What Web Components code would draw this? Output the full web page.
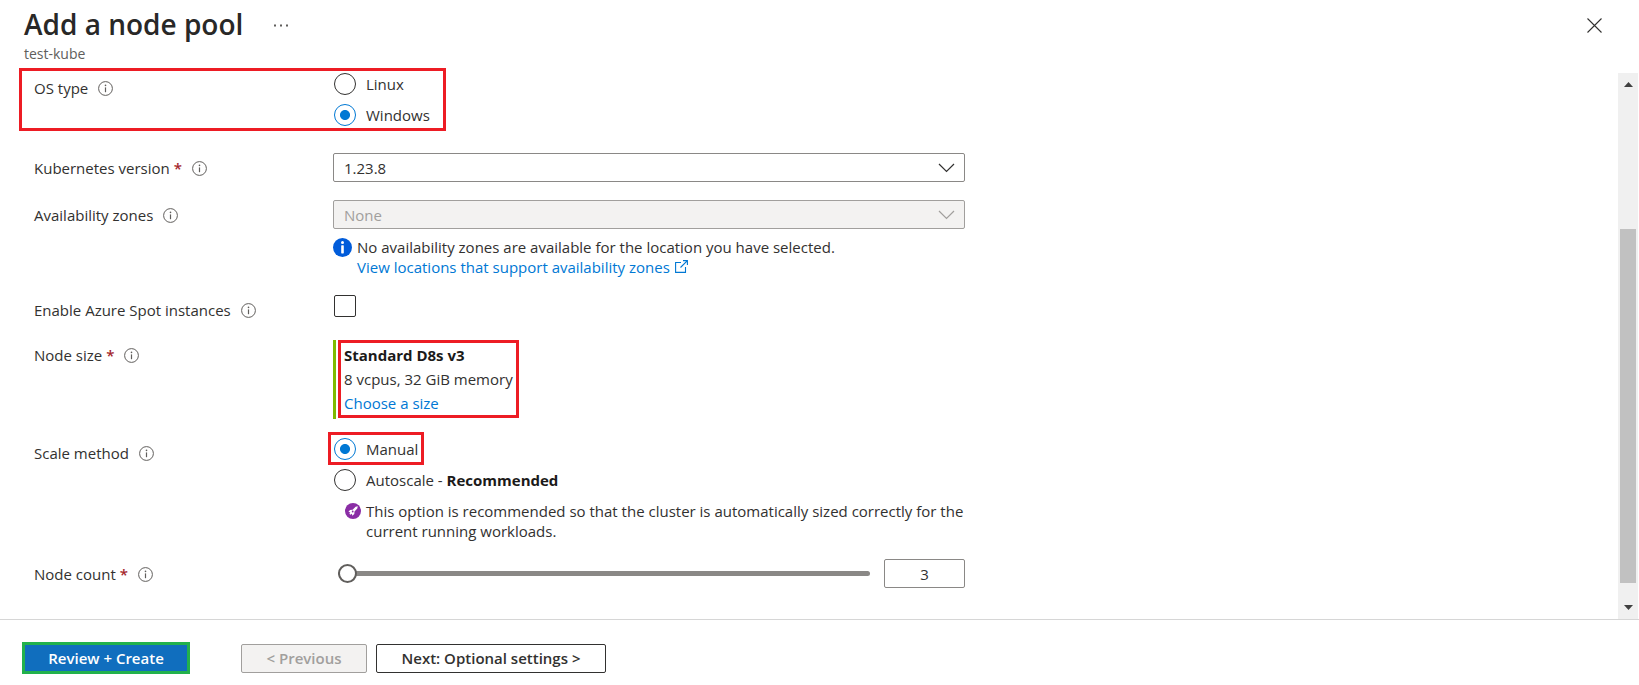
<!DOCTYPE html>
<html lang="en">
<head>
<meta charset="utf-8">
<title>Add a node pool</title>
<style>
  body { margin: 0; background: #fff; color: #323130; font: 15px/20px "Open Sans", "Noto Sans", sans-serif; }
</style>
</head>
<body>
<node-pool-page></node-pool-page>

<script>
const define = (name, html) => {
  const template = document.createElement('template');
  template.innerHTML = html;
  customElements.define(name, class extends HTMLElement {
    constructor() {
      super();
      this.attachShadow({ mode: 'open' }).append(template.content.cloneNode(true));
    }
  });
};

/* Outlined hint icon beside a label */
define('info-hint', `
  <style>
    :host { display: inline-flex; flex: none; width: 15px; height: 15px; color: #605e5c; }
  </style>
  <svg width="15" height="15" viewBox="0 0 15 15" fill="none" stroke="currentColor" aria-hidden="true">
    <circle cx="7.5" cy="7.5" r="6.9"/>
    <path d="M7.5 6.4v4.8" stroke-width="1.2"/>
    <circle cx="7.5" cy="4.4" r=".8" fill="currentColor" stroke="none"/>
  </svg>`);

/* Label column plus field column */
define('form-row', `
  <style>
    :host { display: grid; grid-template-columns: 299px minmax(0, 1fr); margin-top: var(--row-gap, 18px); }
    .label { display: flex; align-items: center; align-self: start; gap: 10px; padding-top: 5px; }
    :host([tall]) .label { padding-top: 10px; }
    .req { color: #a4262c; font-weight: 600; margin-left: -6px; }
    :host(:not([required])) .req { display: none; }
  </style>
  <div class="label"><slot name="label"></slot><span class="req">*</span><info-hint></info-hint></div>
  <div><slot></slot></div>`);

define('radio-option', `
  <style>
    :host { display: flex; width: fit-content; align-items: center; gap: 10px; height: 31px; position: relative; }
    ::slotted(input) {
      appearance: none; box-sizing: border-box; flex: none; width: 22px; height: 22px; margin: 0;
      border: 1px solid #323130; border-radius: 50%; background: #fff;
    }
    ::slotted(input:checked) {
      border-color: #0078d4; background: radial-gradient(circle, #0078d4 0 4.6px, #fff 5.4px);
    }
    :host([marked])::after {
      content: ""; position: absolute; inset: -1px -6px; border: 3px solid #ed1c24; pointer-events: none;
    }
  </style>
  <slot name="control"></slot><slot></slot>`);

define('select-box', `
  <style>
    :host { display: block; position: relative; color: #323130; }
    ::slotted(select) {
      appearance: none; box-sizing: border-box; display: block; width: 100%; height: 29px; margin: 0;
      padding: 0 32px 0 10px; border: 1px solid #8a8886; border-radius: 2px; background: #fff;
      color: #323130; font: inherit;
    }
    ::slotted(select:disabled) { background: #f3f2f1; border-color: #a19f9d; color: #a19f9d; opacity: 1; }
    :host([muted]) { color: #a19f9d; }
    svg { position: absolute; right: 10px; top: 10px; pointer-events: none; }
  </style>
  <slot></slot>
  <svg width="17" height="10" viewBox="0 0 17 10" fill="none" stroke="currentColor" stroke-width="1.2" aria-hidden="true"><path d="M1 1l7.500 7.500L16 1"/></svg>`);

/* Icon with a short block of text */
define('field-note', `
  <style>
    :host { display: flex; gap: 5px; }
    .icon { flex: none; display: flex; height: 20px; align-items: center; }
  </style>
  <div class="icon"><slot name="icon"></slot></div><div><slot></slot></div>`);

/* Chosen size with its details */
define('size-card', `
  <style>
    :host { display: flex; padding: 0 0 1px 2px; border-left: 3px solid #7fba00; }
    .box { border: 3px solid #ed1c24; padding: 0 3px; line-height: 24px; }
    strong { font-weight: 700; color: #1b1a19; }
    strong, span, a { display: block; }
    a { color: #0078d4; text-decoration: none; }
  </style>
  <div class="box">
    <strong><slot name="name"></slot></strong><span><slot></slot></span><a href="#size">Choose a size</a>
  </div>`);

define('node-count', `
  <style>
    :host { display: block; }
    .field { display: flex; align-items: center; gap: 14px; padding-left: 5px; height: 29px; }
    input { margin: 0; font: inherit; color: #323130; }
    input[type=range] { appearance: none; flex: 1; min-width: 0; height: 19px; background: none; }
    input[type=range]::-webkit-slider-runnable-track { height: 5px; border-radius: 3px; background: #8a8886; }
    input[type=range]::-webkit-slider-thumb {
      appearance: none; box-sizing: border-box; width: 19px; height: 19px; margin-top: -7px;
      border: 2px solid #605e5c; border-radius: 50%; background: #fff;
    }
    input[type=text] {
      box-sizing: border-box; width: 81px; height: 29px; padding: 0; text-align: center;
      border: 1px solid #8a8886; border-radius: 2px;
    }
  </style>
  <form-row required>
    <label slot="label" for="count">Node count</label>
    <div class="field">
      <input id="range" type="range" min="3" max="1000" value="3" aria-label="Node count slider">
      <input id="count" type="text" inputmode="numeric" value="3">
    </div>
  </form-row>`);

define('page-header', `
  <style>
    :host { display: flex; align-items: flex-start; padding: 6px 37px 4px 24px; }
    h1 { margin: 0; font-size: 28px; line-height: 36px; font-weight: 600; color: #292827; }
    p { margin: 2px 0 0; font-size: 14px; line-height: 20px; color: #605e5c; }
    button { display: flex; padding: 0; border: 0; background: none; color: #323130; }
    .more { margin: 18px 0 0 31px; }
    .close { margin: 12px 0 0 auto; }
  </style>
  <div><h1><slot></slot></h1><p><slot name="sub"></slot></p></div>
  <button class="more" aria-label="More"><svg width="14" height="3" viewBox="0 0 14 3" fill="#605e5c"><path d="M0 .5h2v2H0zM6 .5h2v2H6zM12 .5h2v2h-2z"/></svg></button>
  <button class="close" aria-label="Close"><svg width="15" height="15" viewBox="0 0 15 15" fill="none" stroke="currentColor" stroke-width="1.100"><path d="M.5.5l14 14M14.500.5l-14 14"/></svg></button>`);

define('scroll-rail', `
  <style>
    :host { display: flex; flex-direction: column; flex: none; width: 20px; margin: 5px 1px 0 0; background: #f0f0f0; color: #404040; }
    svg { display: block; flex: none; margin: 9px auto; }
    .track { flex: 1; display: grid; grid-template-rows: 133fr 354fr 13fr; }
    .thumb { grid-row: 2; margin: 0 2px; background: #c1c1c1; }
  </style>
  <svg width="9" height="5" viewBox="0 0 9 5" fill="currentColor"><path d="M0 5L4.500 0 9 5z"/></svg>
  <div class="track"><div class="thumb"></div></div>
  <svg width="9" height="5" viewBox="0 0 9 5" fill="currentColor"><path d="M0 0l4.500 5L9 0z"/></svg>`);

define('page-footer', `
  <style>
    :host { display: flex; align-items: center; gap: 9px; padding: 22px 22px 11px; border-top: 1px solid #d6d6d6; }
    button {
      box-sizing: border-box; height: 29px; padding: 0; border: 1px solid #323130; border-radius: 2px;
      background: #fff; color: #323130; font: inherit; font-weight: 600;
    }
    .primary { width: 168px; height: 32px; margin-right: 42px; border: 3px solid #22b14c; border-radius: 0; background: #106ebe; color: #fff; }
    .previous { width: 126px; border-color: #a19f9d; background: #f3f2f1; color: #a19f9d; }
    .next { width: 230px; }
  </style>
  <button class="primary">Review + Create</button>
  <button class="previous" disabled>&lt; Previous</button>
  <button class="next">Next: Optional settings &gt;</button>`);

define('node-pool-page', `
  <style>
    :host { display: flex; flex-direction: column; min-height: 100vh; }
    main { flex: 1; display: flex; justify-content: space-between; }
    form { flex: 0 1 931px; min-width: 0; padding: 0 16px 28px 34px; }
    a { color: #0078d4; text-decoration: none; }
    a svg { margin-left: 5px; }
    .marked { position: relative; --row-gap: 0; }
    .marked::after {
      content: ""; position: absolute; top: 0; bottom: -1px; left: -15px; width: 427px;
      box-sizing: border-box; border: 3px solid #ed1c24; pointer-events: none;
    }
    .zones { margin-top: 8px; }
    .advice { margin: 6px 0 0 12px; }
    input[type=checkbox] {
      appearance: none; display: block; box-sizing: border-box; width: 22px; height: 22px; margin: 0 1px;
      border: 1px solid #323130; border-radius: 2px; background: #fff;
    }
    radio-option { margin-left: 1px; }
    strong { font-weight: 700; color: #1b1a19; }
  </style>

  <page-header>Add a node pool<span slot="sub">test-kube</span></page-header>

  <main>
    <form>
      <div class="marked">
        <form-row tall role="radiogroup" aria-label="OS type">
          <span slot="label">OS type</span>
          <radio-option><input slot="control" type="radio" name="os" id="linux"><label for="linux">Linux</label></radio-option>
          <radio-option><input slot="control" type="radio" name="os" id="windows" checked><label for="windows">Windows</label></radio-option>
        </form-row>
      </div>

      <form-row required style="--row-gap: 23px">
        <label slot="label" for="version">Kubernetes version</label>
        <select-box><select id="version"><option>1.23.8</option></select></select-box>
      </form-row>

      <form-row>
        <label slot="label" for="zones">Availability zones</label>
        <select-box muted><select id="zones" disabled><option>None</option></select></select-box>
        <field-note class="zones">
          <svg slot="icon" width="19" height="19" viewBox="0 0 19 19" aria-hidden="true">
            <circle cx="9.500" cy="9.500" r="9.500" fill="#015cda"/>
            <circle cx="9.500" cy="4.600" r="1.500" fill="#fff"/>
            <rect x="8.200" y="7.200" width="2.600" height="8.200" rx=".6" fill="#fff"/>
          </svg>
          No availability zones are available for the location you have selected.<br>
          <a href="#zones">View locations that support availability zones<svg width="13" height="13" viewBox="0 0 13 13" fill="none" stroke="currentColor" stroke-width="1.100" aria-hidden="true"><path d="M6 2.500H.6v9.900h9.900V7M8 .6h4.400V5M12.400.6L5.500 7.500"/></svg></a>
        </field-note>
      </form-row>

      <form-row>
        <label slot="label" for="spot">Enable Azure Spot instances</label>
        <input type="checkbox" id="spot">
      </form-row>

      <form-row required style="--row-gap: 20px">
        <span slot="label">Node size</span>
        <size-card><span slot="name">Standard D8s v3</span>8 vcpus, 32 GiB memory</size-card>
      </form-row>

      <form-row tall role="radiogroup" aria-label="Scale method" style="--row-gap: 14px">
        <span slot="label">Scale method</span>
        <radio-option marked><input slot="control" type="radio" name="scale" id="manual" checked><label for="manual">Manual</label></radio-option>
        <radio-option><input slot="control" type="radio" name="scale" id="auto"><label for="auto">Autoscale - <strong>Recommended</strong></label></radio-option>
        <field-note class="advice">
          <svg slot="icon" width="16" height="16" viewBox="0 0 16 16" aria-hidden="true">
            <circle cx="8" cy="8" r="8" fill="#8a2da5"/>
            <path d="M12.800 3.200L10.600 3.800 7.600 6.700 5 6.900 3.400 9l1.900.3-.9 1.500 1 .9 1.500-.9.4 2 2-1.800.2-2.500 2.800-3z" fill="#fff"/>
            <circle cx="7.700" cy="8.500" r=".9" fill="#8a2da5"/>
          </svg>
          This option is recommended so that the cluster is automatically sized correctly for the current running workloads.
        </field-note>
      </form-row>

      <node-count></node-count>
    </form>
    <scroll-rail></scroll-rail>
  </main>

  <page-footer></page-footer>`);
</script>
</body>
</html>
